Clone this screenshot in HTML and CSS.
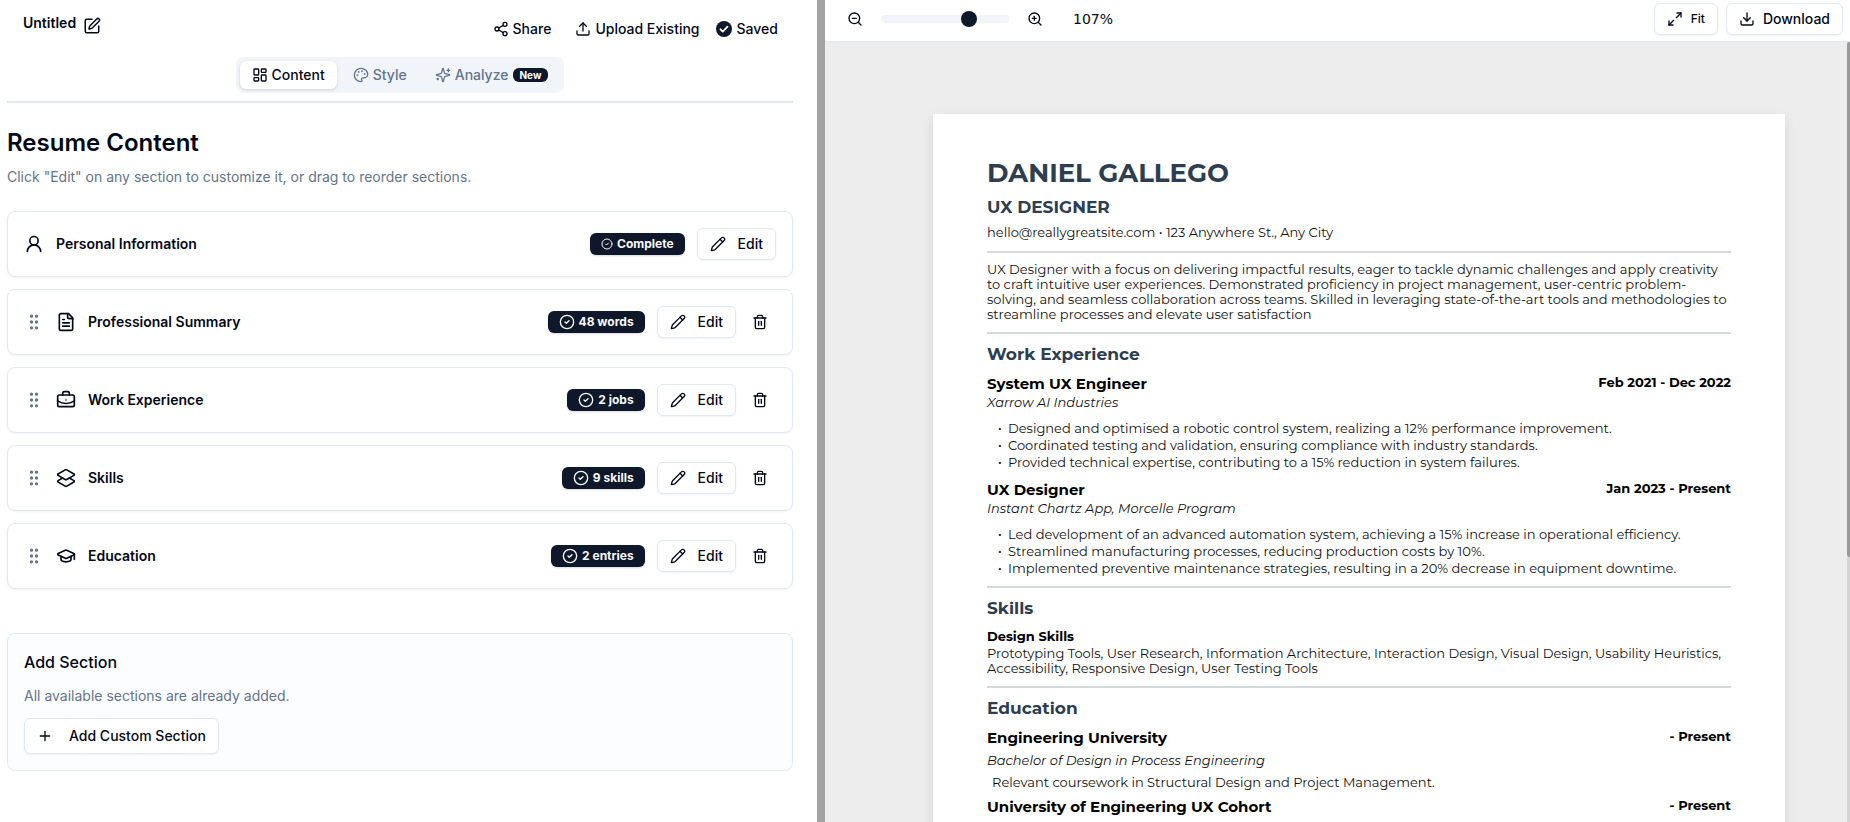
FILE: index.html
```html
<!DOCTYPE html>
<html lang="en">
<head>
    <meta charset="UTF-8">
    <meta name="viewport" content="width=device-width, initial-scale=1.0">
    <title>Resume Builder</title>
    <link rel="stylesheet" href="styles.css">
</head>
<body>
    <!-- shared icons -->
    <svg class="sprite" aria-hidden="true">
        <symbol id="i-check" viewBox="0 0 24 24"><circle cx="12" cy="12" r="10"/><path d="m9 12 2 2 4-4"/></symbol>
        <symbol id="i-pencil" viewBox="0 0 24 24"><path d="M21.174 6.812a1 1 0 0 0-3.986-3.987L3.842 16.174a2 2 0 0 0-.5.83l-1.321 4.352a.5.5 0 0 0 .623.622l4.353-1.32a2 2 0 0 0 .83-.497z"/><path d="m15 5 4 4"/></symbol>
        <symbol id="i-trash" viewBox="0 0 24 24"><path d="M3 6h18"/><path d="M19 6v14a2 2 0 0 1-2 2H7a2 2 0 0 1-2-2V6"/><path d="M8 6V4a2 2 0 0 1 2-2h4a2 2 0 0 1 2 2v2"/><path d="M10 11v6"/><path d="M14 11v6"/></symbol>
        <symbol id="i-grip" viewBox="0 0 24 24"><circle cx="9" cy="5" r="1"/><circle cx="9" cy="12" r="1"/><circle cx="9" cy="19" r="1"/><circle cx="15" cy="5" r="1"/><circle cx="15" cy="12" r="1"/><circle cx="15" cy="19" r="1"/></symbol>
    </svg>

    <div class="app">
        <main class="editor">
            <header class="editor-header">
                <div class="top-row">
                    <div class="doc-name">
                        <span>Untitled</span>
                        <button class="icon-btn" aria-label="Rename">
                            <svg class="icon" viewBox="0 0 24 24"><path d="M12 3H5a2 2 0 0 0-2 2v14a2 2 0 0 0 2 2h14a2 2 0 0 0 2-2v-7"/><path d="M18.375 2.625a1 1 0 0 1 3 3l-9.013 9.014a2 2 0 0 1-.853.505l-2.873.84a.5.5 0 0 1-.62-.62l.84-2.873a2 2 0 0 1 .506-.852z"/></svg>
                        </button>
                    </div>
                    <div class="actions">
                        <button class="action">
                            <svg class="icon" viewBox="0 0 24 24"><circle cx="18" cy="5" r="3"/><circle cx="6" cy="12" r="3"/><circle cx="18" cy="19" r="3"/><path d="m8.59 13.51 6.83 3.98"/><path d="m15.41 6.51-6.82 3.98"/></svg>
                            Share
                        </button>
                        <button class="action">
                            <svg class="icon" viewBox="0 0 24 24"><path d="M21 15v4a2 2 0 0 1-2 2H5a2 2 0 0 1-2-2v-4"/><path d="m17 8-5-5-5 5"/><path d="M12 3v12"/></svg>
                            Upload Existing
                        </button>
                        <span class="saved">
                            <svg viewBox="0 0 16 16"><circle cx="8" cy="8" r="8" fill="#0f172a"/><path d="m4.5 8.3 2.3 2.3 4.7-4.9" fill="none" stroke="#fff" stroke-width="1.8" stroke-linecap="round" stroke-linejoin="round"/></svg>
                            Saved
                        </span>
                    </div>
                </div>
                <nav class="tabs">
                    <button class="tab active">
                        <svg class="icon" viewBox="0 0 24 24"><rect width="7" height="9" x="3" y="3" rx="1"/><rect width="7" height="5" x="14" y="3" rx="1"/><rect width="7" height="9" x="14" y="12" rx="1"/><rect width="7" height="5" x="3" y="16" rx="1"/></svg>
                        Content
                    </button>
                    <button class="tab">
                        <svg class="icon" viewBox="0 0 24 24"><circle cx="13.5" cy="6.5" r=".5"/><circle cx="17.5" cy="10.5" r=".5"/><circle cx="8.5" cy="7.5" r=".5"/><circle cx="6.5" cy="12.5" r=".5"/><path d="M12 2C6.5 2 2 6.5 2 12s4.5 10 10 10c.926 0 1.648-.746 1.648-1.688 0-.437-.18-.835-.437-1.125-.29-.289-.438-.652-.438-1.125a1.64 1.64 0 0 1 1.668-1.668h1.996c3.051 0 5.555-2.503 5.555-5.554C21.965 6.012 17.461 2 12 2z"/></svg>
                        Style
                    </button>
                    <button class="tab">
                        <svg class="icon" viewBox="0 0 24 24"><path d="M9.937 15.5A2 2 0 0 0 8.5 14.063l-6.135-1.582a.5.5 0 0 1 0-.962L8.5 9.936A2 2 0 0 0 9.937 8.5l1.582-6.135a.5.5 0 0 1 .963 0L14.063 8.5A2 2 0 0 0 15.5 9.937l6.135 1.581a.5.5 0 0 1 0 .964L15.5 14.063a2 2 0 0 0-1.437 1.437l-1.582 6.135a.5.5 0 0 1-.963 0z"/><path d="M20 3v4"/><path d="M22 5h-4"/><path d="M4 17v2"/><path d="M5 18H3"/></svg>
                        Analyze
                        <span class="new-badge">New</span>
                    </button>
                </nav>
            </header>

            <h1>Resume Content</h1>
            <p class="muted intro">Click "Edit" on any section to customize it, or drag to reorder sections.</p>

            <ul class="sections">
                <li class="card">
                    <svg class="icon lg" viewBox="0 0 24 24"><circle cx="12" cy="8" r="5"/><path d="M20 21a8 8 0 0 0-16 0"/></svg>
                    <h2>Personal Information</h2>
                    <span class="badge"><svg class="icon sm"><use href="#i-check"/></svg>Complete</span>
                    <button class="btn edit"><svg class="icon"><use href="#i-pencil"/></svg>Edit</button>
                </li>
                <li class="card">
                    <svg class="icon lg grip"><use href="#i-grip"/></svg>
                    <svg class="icon lg" viewBox="0 0 24 24"><path d="M15 2H6a2 2 0 0 0-2 2v16a2 2 0 0 0 2 2h12a2 2 0 0 0 2-2V7Z"/><path d="M14 2v4a2 2 0 0 0 2 2h4"/><path d="M10 9H8"/><path d="M16 13H8"/><path d="M16 17H8"/></svg>
                    <h2>Professional Summary</h2>
                    <span class="badge"><svg class="icon"><use href="#i-check"/></svg>48 words</span>
                    <button class="btn edit"><svg class="icon"><use href="#i-pencil"/></svg>Edit</button>
                    <button class="icon-btn trash" aria-label="Delete"><svg class="icon"><use href="#i-trash"/></svg></button>
                </li>
                <li class="card">
                    <svg class="icon lg grip"><use href="#i-grip"/></svg>
                    <svg class="icon lg" viewBox="0 0 24 24"><path d="M12 12h.01"/><path d="M16 6V4a2 2 0 0 0-2-2h-4a2 2 0 0 0-2 2v2"/><path d="M22 13a18.15 18.15 0 0 1-20 0"/><rect width="20" height="14" x="2" y="6" rx="2"/></svg>
                    <h2>Work Experience</h2>
                    <span class="badge"><svg class="icon"><use href="#i-check"/></svg>2 jobs</span>
                    <button class="btn edit"><svg class="icon"><use href="#i-pencil"/></svg>Edit</button>
                    <button class="icon-btn trash" aria-label="Delete"><svg class="icon"><use href="#i-trash"/></svg></button>
                </li>
                <li class="card">
                    <svg class="icon lg grip"><use href="#i-grip"/></svg>
                    <svg class="icon lg" viewBox="0 0 24 24"><path d="m16.02 12 5.48 3.13a1 1 0 0 1 0 1.74L13 21.74a2 2 0 0 1-2 0l-8.5-4.87a1 1 0 0 1 0-1.74L7.98 12"/><path d="M13 13.74a2 2 0 0 1-2 0L2.5 8.87a1 1 0 0 1 0-1.74L11 2.26a2 2 0 0 1 2 0l8.5 4.87a1 1 0 0 1 0 1.74Z"/></svg>
                    <h2>Skills</h2>
                    <span class="badge"><svg class="icon"><use href="#i-check"/></svg>9 skills</span>
                    <button class="btn edit"><svg class="icon"><use href="#i-pencil"/></svg>Edit</button>
                    <button class="icon-btn trash" aria-label="Delete"><svg class="icon"><use href="#i-trash"/></svg></button>
                </li>
                <li class="card">
                    <svg class="icon lg grip"><use href="#i-grip"/></svg>
                    <svg class="icon lg" viewBox="0 0 24 24"><path d="M21.42 10.922a1 1 0 0 0-.019-1.838L12.83 5.18a2 2 0 0 0-1.66 0L2.6 9.08a1 1 0 0 0 0 1.832l8.57 3.908a2 2 0 0 0 1.66 0z"/><path d="M22 10v6"/><path d="M6 12.5V16a6 3 0 0 0 12 0v-3.5"/></svg>
                    <h2>Education</h2>
                    <span class="badge"><svg class="icon"><use href="#i-check"/></svg>2 entries</span>
                    <button class="btn edit"><svg class="icon"><use href="#i-pencil"/></svg>Edit</button>
                    <button class="icon-btn trash" aria-label="Delete"><svg class="icon"><use href="#i-trash"/></svg></button>
                </li>
            </ul>

            <section class="add-section">
                <h2>Add Section</h2>
                <p class="muted">All available sections are already added.</p>
                <button class="btn add"><svg class="icon" viewBox="0 0 24 24"><path d="M5 12h14"/><path d="M12 5v14"/></svg>Add Custom Section</button>
            </section>
        </main>

        <div class="splitter"></div>

        <section class="preview">
            <div class="toolbar">
                <button class="icon-btn" aria-label="Zoom out"><svg class="icon" viewBox="0 0 24 24"><circle cx="11" cy="11" r="8"/><path d="m21 21-4.35-4.35"/><path d="M8 11h6"/></svg></button>
                <input class="zoom" type="range" min="0" max="100" value="71" aria-label="Zoom">
                <button class="icon-btn" aria-label="Zoom in"><svg class="icon" viewBox="0 0 24 24"><circle cx="11" cy="11" r="8"/><path d="m21 21-4.35-4.35"/><path d="M11 8v6"/><path d="M8 11h6"/></svg></button>
                <span class="zoom-value">107%</span>
                <button class="btn fit"><svg class="icon" viewBox="0 0 24 24"><path d="M15 3h6v6"/><path d="m21 3-7 7"/><path d="m3 21 7-7"/><path d="M9 21H3v-6"/></svg>Fit</button>
                <button class="btn"><svg class="icon" viewBox="0 0 24 24"><path d="M21 15v4a2 2 0 0 1-2 2H5a2 2 0 0 1-2-2v-4"/><path d="m7 10 5 5 5-5"/><path d="M12 3v12"/></svg>Download</button>
            </div>
            <div class="canvas">
                <article class="page">
                    <h1>DANIEL GALLEGO</h1>
                    <p class="role">UX DESIGNER</p>
                    <p class="contact">hello@reallygreatsite.com • 123 Anywhere St., Any City</p>
                    <hr>
                    <p class="text">UX Designer with a focus on delivering impactful results, eager to tackle dynamic challenges and apply creativity<br>
                    to craft intuitive user experiences. Demonstrated proficiency in project management, user-centric problem-<br>
                    solving, and seamless collaboration across teams. Skilled in leveraging state-of-the-art tools and methodologies to<br>
                    streamline processes and elevate user satisfaction</p>
                    <hr>
                    <h2>Work Experience</h2>
                    <div class="job">
                        <div class="job-head"><h3>System UX Engineer</h3><span>Feb 2021 - Dec 2022</span></div>
                        <p class="org">Xarrow AI Industries</p>
                        <ul>
                            <li>Designed and optimised a robotic control system, realizing a 12% performance improvement.</li>
                            <li>Coordinated testing and validation, ensuring compliance with industry standards.</li>
                            <li>Provided technical expertise, contributing to a 15% reduction in system failures.</li>
                        </ul>
                    </div>
                    <div class="job">
                        <div class="job-head"><h3>UX Designer</h3><span>Jan 2023 - Present</span></div>
                        <p class="org">Instant Chartz App, Morcelle Program</p>
                        <ul>
                            <li>Led development of an advanced automation system, achieving a 15% increase in operational efficiency.</li>
                            <li>Streamlined manufacturing processes, reducing production costs by 10%.</li>
                            <li>Implemented preventive maintenance strategies, resulting in a 20% decrease in equipment downtime.</li>
                        </ul>
                    </div>
                    <hr>
                    <h2>Skills</h2>
                    <h4>Design Skills</h4>
                    <p class="text">Prototyping Tools, User Research, Information Architecture, Interaction Design, Visual Design, Usability Heuristics,<br>
                    Accessibility, Responsive Design, User Testing Tools</p>
                    <hr>
                    <h2>Education</h2>
                    <div class="school">
                        <div class="job-head"><h3>Engineering University</h3><span>- Present</span></div>
                        <p class="org">Bachelor of Design in Process Engineering</p>
                        <p class="note">Relevant coursework in Structural Design and Project Management.</p>
                    </div>
                    <div class="school">
                        <div class="job-head"><h3>University of Engineering UX Cohort</h3><span>- Present</span></div>
                    </div>
                </article>
                <div class="scrollbar"><div class="thumb"></div></div>
            </div>
        </section>
    </div>
</body>
</html>
```
FILE: styles.css
```css
*{
    margin: 0;
    padding: 0;
    box-sizing: border-box;
}
body{
    font-family: Inter, "Liberation Sans", sans-serif;
    font-size: 14px;
    line-height: 20px;
    color: #020817;
    background: #fff;
}
button{
    font: inherit;
    font-weight: 500;
    color: inherit;
    background: none;
    border: none;
    cursor: pointer;
}
ul{
    list-style: none;
}
.sprite{
    display: none;
}
.icon{
    width: 16px;
    height: 16px;
    flex: none;
    fill: none;
    stroke: currentColor;
    stroke-width: 2;
    stroke-linecap: round;
    stroke-linejoin: round;
}
.icon.sm{
    width: 12px;
    height: 12px;
}
.icon.lg{
    width: 20px;
    height: 20px;
}
.muted{
    color: #64748b;
}
.app{
    display: grid;
    grid-template-columns: 817fr 8px 1025fr;
    height: 100vh;
    overflow: hidden;
}

/* left side */
.editor{
    padding: 0 24px 0 7px;
}
.editor-header{
    border-bottom: 2px solid #e2e8f0;
    padding-bottom: 8px;
}
.top-row{
    display: flex;
    justify-content: space-between;
    align-items: flex-start;
    height: 57px;
    padding: 13px 15px 0 16px;
}
.doc-name{
    display: flex;
    gap: 7px;
    font-weight: 600;
}
.doc-name .icon-btn{
    padding-top: 4px;
}
.doc-name .icon{
    width: 18px;
    height: 18px;
}
.actions{
    display: flex;
    align-items: center;
    padding-top: 6px;
    gap: 24px;
}
.action, .saved{
    display: flex;
    align-items: center;
    gap: 4px;
    font-weight: 500;
}
.saved{
    margin-left: -8px;
    gap: 5px;
}
.saved svg{
    width: 16px;
    height: 16px;
}
.icon-btn{
    display: flex;
    align-items: center;
    justify-content: center;
}
.tabs{
    display: flex;
    gap: 4px;
    width: fit-content;
    margin: 0 auto;
    padding: 4px;
    border-radius: 8px;
    background: #f1f5f9;
}
.tab{
    display: flex;
    align-items: center;
    gap: 4px;
    height: 28px;
    padding: 0 12px;
    border-radius: 6px;
    color: #64748b;
}
.tab.active{
    background: #fff;
    color: #020817;
    box-shadow: 0 1px 3px rgba(0, 0, 0, 0.15);
}
.new-badge{
    background: #0f172a;
    color: #fff;
    font-size: 10px;
    font-weight: 700;
    line-height: 14px;
    padding: 0 7px;
    border-radius: 6px;
}
.editor h1{
    font-size: 24px;
    font-weight: 600;
    line-height: 32px;
    margin-top: 24px;
}
.intro{
    margin-top: 8px;
}
.sections{
    display: flex;
    flex-direction: column;
    gap: 12px;
    margin-top: 24px;
}
.card{
    display: flex;
    align-items: center;
    gap: 12px;
    padding: 16px;
    border: 1px solid #e2e8f0;
    border-radius: 8px;
    box-shadow: 0 1px 2px rgba(0, 0, 0, 0.05);
}
.card h2{
    flex: 1;
    font-size: 14px;
    font-weight: 600;
}
.grip{
    color: #64748b;
}
.badge{
    display: flex;
    align-items: center;
    gap: 4px;
    height: 22px;
    padding: 0 11px;
    border-radius: 6px;
    background: #0f172a;
    color: #f8fafc;
    font-size: 12px;
    font-weight: 700;
    box-shadow: 0 1px 2px rgba(0, 0, 0, 0.15);
}
.btn{
    display: flex;
    align-items: center;
    gap: 8px;
    height: 32px;
    padding: 0 12px;
    border: 1px solid #e2e8f0;
    border-radius: 6px;
    background: #fff;
    box-shadow: 0 1px 2px rgba(0, 0, 0, 0.05);
}
.edit{
    gap: 12px;
}
.trash{
    width: 32px;
    height: 32px;
    margin-left: -4px;
}
.add-section{
    margin-top: 44px;
    padding: 16px;
    border: 1px solid #e2e8f0;
    border-radius: 8px;
    background: #fcfdff;
}
.add-section h2{
    font-size: 16px;
    font-weight: 500;
    line-height: 24px;
}
.add-section p{
    margin: 12px 0;
}
.add{
    height: 36px;
    gap: 16px;
}
.splitter{
    background: #a3a3a3;
    cursor: col-resize;
}

/* right side */
.preview{
    display: flex;
    flex-direction: column;
    min-width: 0;
    height: 100vh;
}
.toolbar{
    display: flex;
    align-items: center;
    gap: 8px;
    flex: none;
    height: 42px;
    padding: 0 7px 4px 22px;
    border-bottom: 1px solid #e2e8f0;
}
.zoom{
    appearance: none;
    width: 128px;
    height: 8px;
    margin: 0 10px;
    border-radius: 4px;
    background: #f1f5f9;
}
.zoom::-webkit-slider-thumb{
    appearance: none;
    width: 16px;
    height: 16px;
    border-radius: 50%;
    background: #0f172a;
}
.zoom-value{
    flex: 1;
    margin-left: 22px;
    font-family: "DejaVu Sans", sans-serif;
}
.fit{
    font-size: 12px;
}
.canvas{
    position: relative;
    flex: 1;
    min-height: 0;
    overflow: hidden;
    padding: 72px 65px 0 108px;
    background: #ededed;
}
.scrollbar{
    position: absolute;
    top: 0;
    right: 0;
    bottom: 0;
    width: 3px;
    background: #d4d4d4;
}
.thumb{
    height: 66%;
    border-radius: 3px 0 0 3px;
    background: #999;
}
.page{
    min-height: 1100px;
    padding: 43px 54px;
    background: #fff;
    box-shadow: 0 4px 12px rgba(0, 0, 0, 0.1);
    font-family: Montserrat, Inter, sans-serif;
    font-size: 13px;
    color: #111;
}
.page h1{
    font-size: 26px;
    font-weight: 700;
    line-height: 32px;
    color: #2c3e50;
}
.role{
    margin-top: 6px;
    font-size: 17px;
    font-weight: 700;
    line-height: 24px;
    color: #2c3e50;
}
.contact{
    margin-top: 3px;
}
.page hr{
    height: 2px;
    margin: 9px 0;
    border: none;
    background: #d5d9dd;
}
.page h2{
    margin-bottom: 9px;
    font-size: 17px;
    font-weight: 700;
    line-height: 22px;
    color: #2c3e50;
}
.text{
    padding-bottom: 1px;
    line-height: 15px;
    white-space: nowrap;
}
.job + .job{
    margin-top: 9px;
}
.job-head{
    display: flex;
    justify-content: space-between;
    font-weight: 700;
    line-height: 16px;
    color: #000;
}
.page h3{
    font-size: 15px;
    font-weight: 700;
    line-height: 20px;
}
.org{
    font-style: italic;
    line-height: 16px;
}
.job ul{
    margin-top: 10px;
    padding-left: 11px;
}
.job li{
    display: flex;
    line-height: 17px;
}
.job li::before{
    content: "·";
    width: 10px;
    font-weight: 600;
}
.page h4{
    margin-bottom: 2px;
    font-size: 13px;
    font-weight: 700;
    line-height: 16px;
    color: #000;
}
.school .org{
    margin-top: 4px;
}
.note{
    margin: 6px 0;
    padding-left: 5px;
    line-height: 17px;
}
```
